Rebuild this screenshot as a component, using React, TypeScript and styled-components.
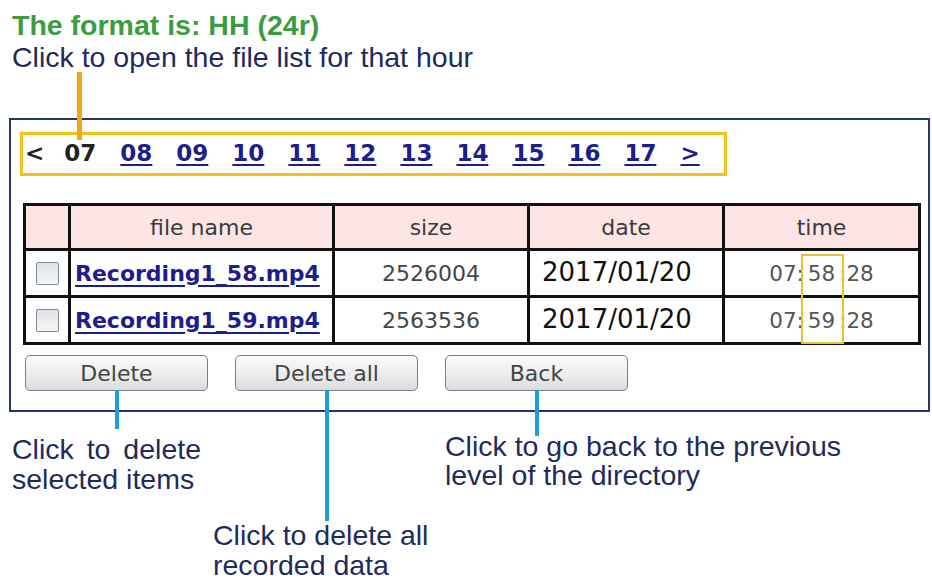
import styled, { createGlobalStyle } from 'styled-components';

const GlobalStyle = createGlobalStyle`
  html, body {
    margin: 0;
    padding: 0;
    background: #ffffff;
  }
  body {
    font-family: "Liberation Sans", Arial, sans-serif;
  }
`;

const Page = styled.div`
  width: 932px;
  height: 581px;
  box-sizing: border-box;
  padding: 9px 0 0 9px;
  overflow: hidden;
`;

const Intro = styled.div`
  padding-left: 3px;
  font-size: 28.5px;
  line-height: 32px;
  color: #1e2a5c;
`;

const FormatTitle = styled.div`
  font-weight: bold;
  color: #3c9c40;
`;

const IntroText = styled.div``;

const Panel = styled.section`
  width: 921px;
  box-sizing: border-box;
  margin-top: 45px;
  border: 2px solid #26356b;
  padding: 12px 10px 19px 9px;
`;

const HourBar = styled.nav`
  display: flex;
  align-items: center;
  gap: 24px;
  width: 707px;
  height: 44px;
  box-sizing: border-box;
  border: 3px solid #f3c31c;
  padding: 0 0 3px 2px;
  font-family: "DejaVu Sans", Verdana, sans-serif;
  font-size: 23px;
  font-weight: bold;
`;

const Arrow = styled.span`
  color: #222222;
  margin-right: -4px;
`;

const CurrentHour = styled.span`
  position: relative;
  color: #222222;

  &::before {
    content: '';
    position: absolute;
    left: 50%;
    bottom: 100%;
    width: 5px;
    margin-left: -3px;
    height: 68px;
    background: #f2a516;
  }
`;

const HourLink = styled.a`
  color: #1d1d8c;
  text-decoration: underline;
  text-decoration-thickness: 2px;
  text-underline-offset: 3px;
  cursor: pointer;
`;

const FileTable = styled.table`
  margin: 27px 0 0 3px;
  width: 895px;
  table-layout: fixed;
  border-collapse: collapse;
  font-family: "DejaVu Sans", Verdana, sans-serif;
`;

const Col = styled.col<{ $width: number }>`
  width: ${p => p.$width}px;
`;

const HeadCell = styled.th`
  height: 42px;
  padding: 0;
  border: 3px solid #111111;
  background: #fde5e5;
  font-size: 22px;
  font-weight: normal;
  color: #3a3a3a;
  text-align: center;
`;

const BodyCell = styled.td<{ $align?: 'left' | 'center' }>`
  position: relative;
  height: 44px;
  padding: 0 0 0 ${p => (p.$align === 'left' ? 4 : 0)}px;
  border: 3px solid #111111;
  background: #ffffff;
  text-align: ${p => p.$align ?? 'center'};
  white-space: nowrap;
`;

const CheckBox = styled.input`
  appearance: none;
  display: block;
  margin: 0 auto;
  width: 23px;
  height: 23px;
  border: 1.5px solid #7f8d9a;
  border-radius: 2px;
  background: linear-gradient(#dfe2e5, #f6f6f6);
`;

const FileLink = styled.a`
  font-size: 22px;
  font-weight: bold;
  color: #1d1d8c;
  text-decoration: underline;
  text-decoration-thickness: 2px;
  text-underline-offset: 4px;
  cursor: pointer;
`;

const SizeText = styled.span`
  font-size: 22px;
  color: #454545;
`;

const DateText = styled.span`
  display: block;
  padding: 0 0 3px 8px;
  font-size: 26px;
  color: #111111;
`;

const TimeText = styled.span`
  font-size: 21.5px;
  color: #555555;
`;

const Minutes = styled.span`
  padding: 0 4px;
`;

/* yellow frame around the minutes column, split over the two rows */
const MinuteFrame = styled.span<{ $edge: 'top' | 'bottom' }>`
  position: absolute;
  left: 50%;
  width: 43px;
  margin-left: -21px;
  box-sizing: border-box;
  top: ${p => (p.$edge === 'top' ? 3 : -2)}px;
  bottom: -2px;
  border: 2px solid #e9c23a;
  ${p => (p.$edge === 'top' ? 'border-bottom-width: 0;' : 'border-top-width: 0;')}
  pointer-events: none;
`;

const ButtonRow = styled.div`
  display: flex;
  gap: 27px;
  margin: 10px 0 0 5px;
`;

const ActionButton = styled.button<{ $lead: number }>`
  position: relative;
  width: 183px;
  height: 36px;
  box-sizing: border-box;
  padding: 0;
  border: 1.5px solid #6f8090;
  border-radius: 5px;
  background: linear-gradient(#fbfbfb, #ececec 55%, #dcdcdc);
  font-family: "DejaVu Sans", Verdana, sans-serif;
  font-size: 22px;
  color: #444444;

  &::after {
    content: '';
    position: absolute;
    left: 50%;
    top: 100%;
    width: 4px;
    margin-left: -2px;
    height: ${p => p.$lead}px;
    background: #1e9fd9;
  }
`;

const Callouts = styled.div`
  display: grid;
  grid-template-columns: 201px 232px 1fr;
  align-items: start;
  margin-left: 3px;
  font-size: 28.5px;
  color: #1f2b5c;
`;

const Callout = styled.p<{ $top: number; $lineHeight: number }>`
  margin: ${p => p.$top}px 0 0;
  line-height: ${p => p.$lineHeight}px;
`;

const Spread = styled.span`
  word-spacing: 5px;
`;

const hours = ['08', '09', '10', '11', '12', '13', '14', '15', '16', '17'];

const files = [
  { name: 'Recording1_58.mp4', size: '2526004', date: '2017/01/20', minute: '58' },
  { name: 'Recording1_59.mp4', size: '2563536', date: '2017/01/20', minute: '59' },
];

export default function App() {
  return (
    <Page>
      <GlobalStyle />
      <Intro>
        <FormatTitle>The format is: HH (24r)</FormatTitle>
        <IntroText>Click to open the file list for that hour</IntroText>
      </Intro>

      <Panel>
        <HourBar>
          <Arrow>&lt;</Arrow>
          <CurrentHour>07</CurrentHour>
          {hours.map(h => (
            <HourLink key={h}>{h}</HourLink>
          ))}
          <HourLink>&gt;</HourLink>
        </HourBar>

        <FileTable>
          <colgroup>
            <Col $width={45} />
            <Col $width={264} />
            <Col $width={195} />
            <Col $width={195} />
            <Col $width={196} />
          </colgroup>
          <thead>
            <tr>
              <HeadCell />
              <HeadCell>file name</HeadCell>
              <HeadCell>size</HeadCell>
              <HeadCell>date</HeadCell>
              <HeadCell>time</HeadCell>
            </tr>
          </thead>
          <tbody>
            {files.map((f, i) => (
              <tr key={f.name}>
                <BodyCell>
                  <CheckBox type="checkbox" />
                </BodyCell>
                <BodyCell $align="left">
                  <FileLink>{f.name}</FileLink>
                </BodyCell>
                <BodyCell>
                  <SizeText>{f.size}</SizeText>
                </BodyCell>
                <BodyCell $align="left">
                  <DateText>{f.date}</DateText>
                </BodyCell>
                <BodyCell>
                  <TimeText>
                    07:<Minutes>{f.minute}</Minutes>:28
                  </TimeText>
                  <MinuteFrame $edge={i === 0 ? 'top' : 'bottom'} />
                </BodyCell>
              </tr>
            ))}
          </tbody>
        </FileTable>

        <ButtonRow>
          <ActionButton $lead={39}>Delete</ActionButton>
          <ActionButton $lead={131}>Delete all</ActionButton>
          <ActionButton $lead={46}>Back</ActionButton>
        </ButtonRow>
      </Panel>

      <Callouts>
        <Callout $top={22} $lineHeight={30}>
          <Spread>Click to delete</Spread>
          <br />
          selected items
        </Callout>
        <Callout $top={108} $lineHeight={30}>
          Click to delete all
          <br />
          recorded data
        </Callout>
        <Callout $top={20} $lineHeight={29}>
          Click to go back to the previous
          <br />
          level of the directory
        </Callout>
      </Callouts>
    </Page>
  );
}
